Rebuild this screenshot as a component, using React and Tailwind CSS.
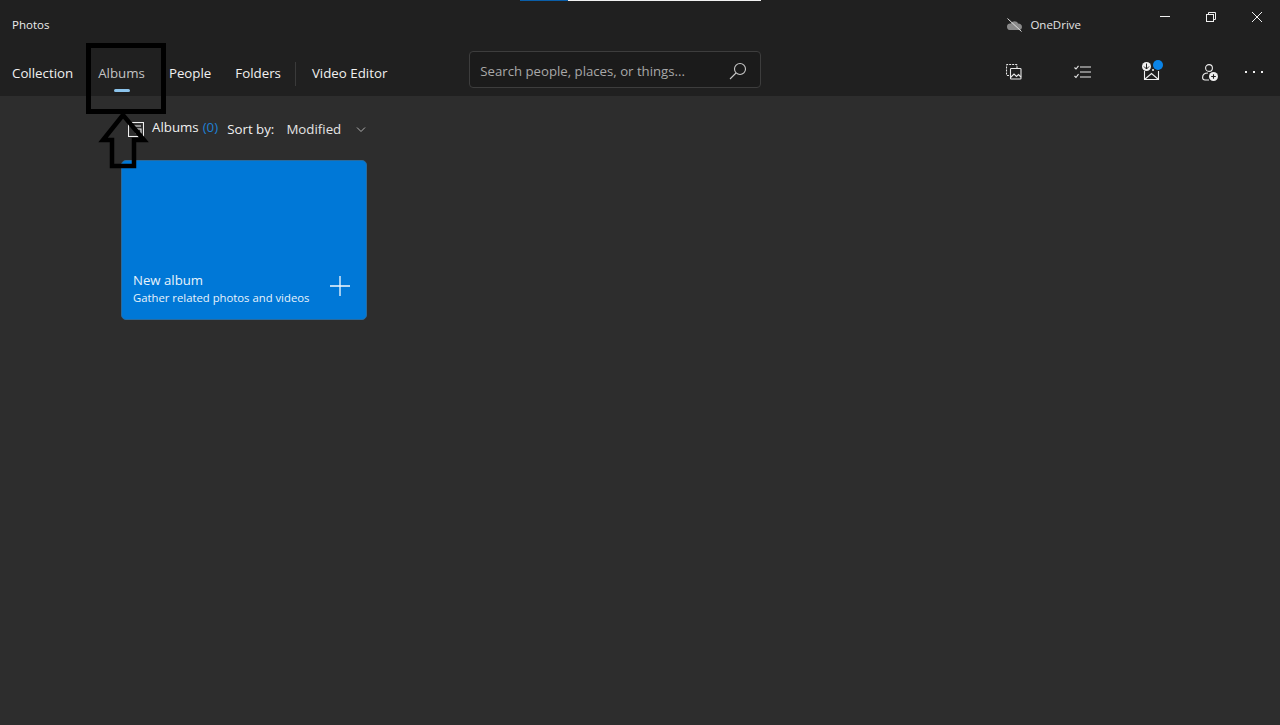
const font = { fontFamily: '"Open Sans", sans-serif' };

function Toolbar() {
  return (
    <div className="flex items-center h-[48px] w-full">
      <nav className="flex items-center gap-[25px] pl-[12px] mt-[4px] text-[13.3px] text-[#f0f0f0]">
        <span>Collection</span>
        <span className="relative text-[#c4c4c4]">
          Albums
          <span className="absolute left-[16px] top-[25px] w-[16px] h-[3px] rounded-full bg-[#8cc4ec]"></span>
        </span>
        <span className="-ml-[1px]">People</span>
        <span className="-ml-[1px]">Folders</span>
        <span className="w-px h-[24px] bg-[#3a3a3a] -ml-[11px] -mr-[10px]"></span>
        <span className="ml-[1px]">Video Editor</span>
      </nav>
      <div className="ml-[82px] flex items-center justify-between w-[292px] h-[37px] mt-[-5px] pl-[10px] pr-[13px] bg-[#1b1b1b] border border-[#3d3d3d] rounded-[4px]">
        <span className="mt-[4px] text-[13.2px] text-[#a8a8a8]">Search people, places, or things...</span>
        <svg className="mt-[3px]" width="18" height="18" viewBox="0 0 18 18" fill="none" stroke="#c8c8c8" strokeWidth="1.1">
          <circle cx="11" cy="7" r="5.5" />
          <path d="M7 11 L1 17" />
        </svg>
      </div>
      <div className="ml-auto flex items-center pr-[17px]">
        <svg className="mr-[52px]" width="16" height="16" viewBox="0 0 16 16" fill="none" stroke="#e8e8e8" strokeWidth="1.1">
          <path d="M3 11.5 H1.5 a1 1 0 0 1 -1 -1 V1.5 a1 1 0 0 1 1 -1 H10 a1 1 0 0 1 1 1 V4" strokeDasharray="2 1" />
          <rect x="4.5" y="4.5" width="10.5" height="10.5" rx="0.8" />
          <path d="M4.5 13.5 L8 10 L10.5 12.5 L12.5 10.5 L15 13" />
        </svg>
        <svg className="mr-[51px]" width="17" height="14" viewBox="0 0 17 14" fill="none" stroke="#e8e8e8" strokeWidth="1.1">
          <path d="M6 2 H17 M6 7 H17 M6 12 H17" />
          <path d="M0.5 2.5 L2 4 L4.5 0.8 M0.5 11 L2 12.5 L4.5 9.2" />
        </svg>
        <div className="relative w-[18px] h-[18px] mr-[42px]">
          <svg width="18" height="18" viewBox="0 0 18 18" fill="none" stroke="#f0f0f0" strokeWidth="1.1">
            <path d="M2.5 8 V16.5 H16.5 V8" />
            <path d="M2.5 16.5 L9.5 10.5 L16.5 16.5" />
            <circle cx="11" cy="7" r="1" fill="#f0f0f0" stroke="none" />
          </svg>
          <span className="absolute left-0 top-[-1px] w-[9px] h-[9px] rounded-full bg-[#f0f0f0] flex items-center justify-center">
            <svg width="7" height="7" viewBox="0 0 7 7" fill="none" stroke="#202020" strokeWidth="1">
              <path d="M3.5 0.5 V6 M1 3.5 L3.5 6 L6 3.5" />
            </svg>
          </span>
          <span className="absolute left-[11px] top-[-3px] w-[10px] h-[10px] rounded-full bg-[#0a84e8]"></span>
        </div>
        <svg className="mr-[27px]" width="16" height="17" viewBox="0 0 16 17" fill="none" stroke="#f0f0f0" strokeWidth="1.1">
          <circle cx="7" cy="4" r="3.4" />
          <path d="M6 9 C2.5 9 0.6 11 0.6 13.5 C0.6 15 1.6 16 3 16 H7" />
          <circle cx="11.5" cy="12.5" r="4.5" fill="#f0f0f0" stroke="none" />
          <path d="M9.2 12.5 H13.8 M11.5 10.2 V14.8" stroke="#202020" />
        </svg>
        <div className="flex items-center gap-[6px]">
          <span className="w-[2px] h-[2px] bg-[#f0f0f0]"></span>
          <span className="w-[2px] h-[2px] bg-[#f0f0f0]"></span>
          <span className="w-[2px] h-[2px] bg-[#f0f0f0]"></span>
        </div>
      </div>
    </div>
  );
}

function TitleBar() {
  return (
    <div className="relative flex items-center h-[48px] pt-[2px] w-full">
      <div className="absolute top-0 left-[520px] flex h-px">
        <span className="w-[48px] bg-[#0a5ea8]"></span>
        <span className="w-[193px] bg-[#f2f2f2]"></span>
      </div>
      <span className="pl-[12px] text-[11.5px] text-[#ececec]">Photos</span>
      <div className="ml-auto flex items-center">
        <svg width="17" height="14" viewBox="0 0 17 14" className="mr-[7px]">
          <path d="M1 8.5 C1 6 3 5 5 5.5 C6 2.5 11 2.5 12 5.5 C14.5 5.5 16 7 16 9 C16 11 14.5 12 13 12 H3.5 C2 12 1 10.5 1 8.5 Z" fill="#8a8a8a" />
          <path d="M1.5 0.5 L15.5 13.5" stroke="#e0e0e0" strokeWidth="1" />
        </svg>
        <span className="text-[11.5px] text-[#e4e4e4]">OneDrive</span>
        <div className="flex items-center ml-[79px] mt-[-17px] pr-[18px]">
          <span className="w-[10px] h-px bg-[#f0f0f0] mr-[36px]"></span>
          <svg className="mr-[36px]" width="10" height="10" viewBox="0 0 10 10" fill="none" stroke="#f0f0f0" strokeWidth="1">
            <rect x="0.5" y="2.5" width="7" height="7" />
            <path d="M2.5 2.5 V0.5 H9.5 V7.5 H7.5" />
          </svg>
          <svg width="10" height="10" viewBox="0 0 10 10" fill="none" stroke="#f0f0f0" strokeWidth="1">
            <path d="M0 0 L10 10 M10 0 L0 10" />
          </svg>
        </div>
      </div>
    </div>
  );
}

// the black box and arrow drawn on top of the screenshot
function Annotation() {
  return (
    <svg className="absolute left-0 top-0 pointer-events-none" width="1280" height="725" fill="none" stroke="#000000" strokeWidth="5">
      <rect x="88.5" y="45.5" width="75" height="66" strokeWidth="5" />
      <path d="M123 115 L103 140 H112 V166 H134 V140 H144 Z" strokeWidth="4.5" />
    </svg>
  );
}

export default function App() {
  return (
    <div className="relative w-[1280px] h-[725px] overflow-hidden bg-[#2d2d2d]" style={font}>
      <header className="bg-[#202020] h-[96px]">
        <TitleBar />
        <Toolbar />
      </header>
      <main className="pl-[121px]">
        <div className="flex items-center h-[64px] pt-[3px] text-[13.3px]">
          <svg className="ml-[7px] mr-[8px]" width="16" height="15" viewBox="0 0 16 15" fill="none" stroke="#f0f0f0" strokeWidth="1.1">
            <rect x="0.5" y="0.5" width="15" height="14" />
            <path d="M3 4 H13 M8 7 H13 V11 H8 Z" />
          </svg>
          <span className="text-[#f0f0f0] mt-[-4px]">Albums</span>
          <span className="ml-[4px] mt-[-4px] text-[#1f80d4]">(0)</span>
          <span className="ml-[9px] text-[#f0f0f0]">Sort by:</span>
          <span className="ml-[12px] text-[#e4e4e4]">Modified</span>
          <svg className="ml-[15px]" width="10" height="6" viewBox="0 0 10 6" fill="none" stroke="#b0b0b0" strokeWidth="1">
            <path d="M1 0.5 L5 4.5 L9 0.5" />
          </svg>
        </div>
        <button className="flex items-end justify-between w-[246px] h-[160px] bg-[#0078d7] border border-[#2a6a9c] rounded-[5px] pl-[11px] pr-[16px] pb-[13px] text-left text-white">
          <div>
            <div className="text-[13.2px] leading-[18px] mb-px text-[#e8f3fb]">New album</div>
            <div className="text-[11.3px] leading-[16px] text-[#e8f3fb]">Gather related photos and videos</div>
          </div>
          <svg className="mb-[10px]" width="20" height="20" viewBox="0 0 20 20" stroke="#f4f9fd" strokeWidth="1.3">
            <path d="M0 10 H20 M10 0 V20" />
          </svg>
        </button>
      </main>
      <Annotation />
    </div>
  );
}
